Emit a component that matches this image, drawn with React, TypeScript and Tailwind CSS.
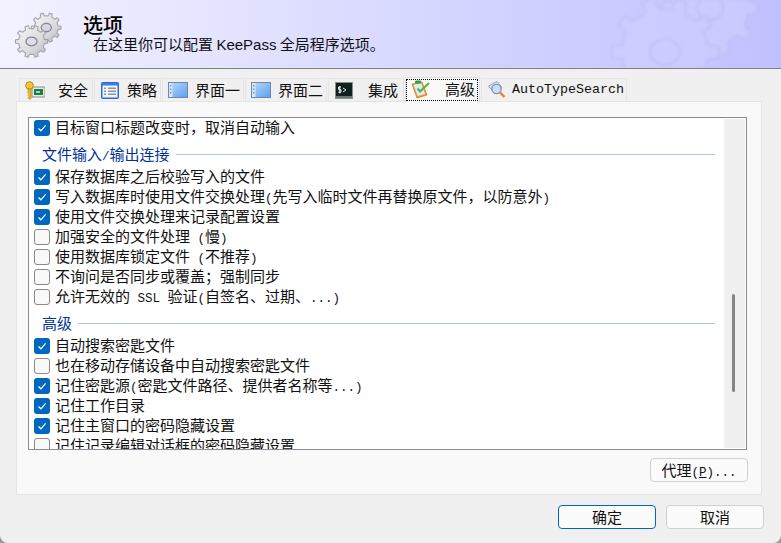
const cjk = "font-['Noto_Sans_CJK_SC',sans-serif]";

// gear outline, used for the banner icon and the faint watermark
const gearPath = (cx: number, cy: number, r: number, teeth: number) => {
  const pts: string[] = [];
  const step = (Math.PI * 2) / teeth;
  for (let i = 0; i < teeth; i++) {
    const a = i * step;
    const offs: [number, number][] = [
      [-0.5, 0.8],
      [-0.26, 0.8],
      [-0.16, 1],
      [0.16, 1],
      [0.26, 0.8],
      [0.5, 0.8],
    ];
    for (const [o, k] of offs) {
      const t = a + o * step;
      pts.push(`${(cx + Math.cos(t) * r * k).toFixed(2)} ${(cy + Math.sin(t) * r * k).toFixed(2)}`);
    }
  }
  return `M${pts.join("L")}Z`;
};

const GearsIcon = () => (
  <svg width="48" height="48" viewBox="0 0 52 52" className="shrink-0 blur-[0.5px]">
    <defs>
      <linearGradient id="gearFill" x1="0" y1="0" x2="1" y2="1">
        <stop offset="0" stopColor="#f6f6f8" />
        <stop offset="0.6" stopColor="#dcdce0" />
        <stop offset="1" stopColor="#b4b4b9" />
      </linearGradient>
    </defs>
    <path d={gearPath(35, 18, 16, 10)} fill="url(#gearFill)" stroke="#a5a5aa" strokeWidth="1.2" strokeLinejoin="round" />
    <ellipse cx="35" cy="18" rx="5.5" ry="4.5" fill="#d5d5e6" stroke="#85858a" strokeWidth="1.4" />
    <path d={gearPath(19, 33, 17.5, 10)} fill="url(#gearFill)" stroke="#a5a5aa" strokeWidth="1.2" strokeLinejoin="round" />
    <ellipse cx="19" cy="33" rx="6" ry="4.8" fill="#dcdcec" stroke="#85858a" strokeWidth="1.4" />
  </svg>
);

const Watermark = () => (
  <svg width="170" height="68" viewBox="0 0 170 68" className="absolute left-[600px] top-0 opacity-60 blur-[1.5px]">
    <g fill="#cfcfff" stroke="#bcbcee" strokeWidth="2" strokeLinejoin="round">
      <path d={gearPath(110, 8, 48, 10)} />
      <ellipse cx="110" cy="8" rx="13" ry="12" />
      <path d={gearPath(65, 52, 54, 10)} />
      <ellipse cx="65" cy="52" rx="15" ry="13" />
    </g>
  </svg>
);

const KeyIcon = () => (
  <svg width="20" height="19" viewBox="0 0 20 19" className="shrink-0">
    <rect x="7" y="6" width="13" height="10" fill="#e8e8e0" stroke="#8a8f88" />
    <rect x="9" y="8" width="9" height="6" fill="#17804a" />
    <rect x="11" y="10" width="4" height="2" fill="#9fd8b0" />
    <circle cx="4.5" cy="4.5" r="3.8" fill="#f5c531" stroke="#b98a14" />
    <path d="M3 8h3v10H4l-1-1.5 1-1-1-1 1-1-1-1z" fill="#f0b820" stroke="#b98a14" strokeWidth="0.7" />
  </svg>
);

const ListIcon = () => (
  <svg width="18" height="17" viewBox="0 0 18 17" className="shrink-0">
    <rect x="0.75" y="0.75" width="16.5" height="15.5" rx="1" fill="#f2f5fb" stroke="#2f6bd6" strokeWidth="1.5" />
    <rect x="1" y="1" width="16" height="2.5" fill="#3f7be0" />
    <path d="M3 5.5h2v1.5H3zM3 8.5h2V10H3zM3 11.5h2V13H3z" fill="#8a94a6" />
    <path d="M7 5.5h8v1.5H7zM7 8.5h8V10H7zM7 11.5h8V13H7z" fill="#8a94a6" />
  </svg>
);

const WindowIcon = () => (
  <svg width="20" height="16" viewBox="0 0 20 16" className="shrink-0">
    <defs>
      <linearGradient id="winFill" x1="0" y1="0" x2="1" y2="1">
        <stop offset="0" stopColor="#b9dafb" />
        <stop offset="1" stopColor="#5aa0f2" />
      </linearGradient>
    </defs>
    <rect x="0.5" y="0.5" width="19" height="15" fill="url(#winFill)" stroke="#6f86a8" />
    <rect x="1" y="1" width="3.5" height="14" fill="#d8e6f6" />
    <path d="M2 3h1.4v1.4H2zM2 6.5h1.4v1.4H2zM2 10h1.4v1.4H2z" fill="#6f8fc0" />
  </svg>
);

const TerminalIcon = () => (
  <svg width="18" height="17" viewBox="0 0 18 17" className="shrink-0">
    <rect x="0.5" y="0.5" width="17" height="16" fill="#10201f" stroke="#8d8d88" />
    <path d="M6 5H3.6v2.6H6v2.6H3.4M4.8 4v7.4" fill="none" stroke="#f2f2f2" strokeWidth="1" />
    <path d="M8 6l3 2-3 2" fill="none" stroke="#d8e8e8" strokeWidth="1" />
    <path d="M1 15h16" stroke="#c9c9c4" />
  </svg>
);

const ClipboardIcon = () => (
  <svg width="20" height="19" viewBox="0 0 20 19" className="shrink-0">
    <path d="M1 4l10-2 5 13-10 3z" fill="#f09a2c" stroke="#c9741a" strokeWidth="0.7" />
    <path d="M2.6 4.8l7.6-1.5 4 10.6-7.6 2.2z" fill="#dcecf8" />
    <rect x="4" y="0.5" width="6" height="3" rx="1" fill="#2f9e44" />
    <path d="M6.5 8.5l2.6 3L18 3" fill="none" stroke="#55b83e" strokeWidth="2.2" />
  </svg>
);

const SearchIcon = () => (
  <svg width="18" height="18" viewBox="0 0 18 18" className="shrink-0">
    <path d="M0.5 5L9 0.5l5 6-8 5z" fill="#dcdcf4" stroke="#9a9ad0" />
    <circle cx="8.5" cy="8" r="4.6" fill="#bfe3fa" stroke="#8f8fc4" strokeWidth="1.4" />
    <path d="M12 11.5l4.5 4.5" stroke="#e8843a" strokeWidth="2.4" />
  </svg>
);

const Latin = ({ text }: { text: string }) => (
  <>
    {text.split(/([\x20-\x7e]+)/).map((part, i) =>
      /^[\x20-\x7e]+$/.test(part) ? (
        <span key={i} className="font-['Liberation_Mono','Noto_Sans_CJK_SC',monospace] text-[12.5px] leading-[12px] whitespace-pre">
          {part}
        </span>
      ) : (
        <span key={i}>{part}</span>
      ),
    )}
  </>
);

const Check = ({ on, label }: { on: boolean; label: string }) => (
  <div className="flex h-[20px] shrink-0 items-center gap-[5px] pl-[5px] leading-[18px] whitespace-nowrap text-[#111]">
    {on ? (
      <span className="flex h-[16px] w-[16px] shrink-0 items-center justify-center rounded-[3px] bg-[#0067c0]">
        <svg width="10" height="10" viewBox="0 0 10 10">
          <path d="M1.5 5.5l2.4 2.3L8.6 2.4" fill="none" stroke="#fff" strokeWidth="1.2" />
        </svg>
      </span>
    ) : (
      <span className="h-[16px] w-[16px] shrink-0 rounded-[3px] border border-[#8a8a8a] bg-[#f9f9f9]" />
    )}
    <span className="pb-[2px]">
      <Latin text={label} />
    </span>
  </div>
);

const Group = ({ label }: { label: string }) => (
  <div className="flex h-[29px] shrink-0 items-center gap-[6px] pt-[3px] pl-[13px] pr-[9px] leading-[20px] whitespace-nowrap text-[#003399]">
    <span>
      <Latin text={label} />
    </span>
    <div className="h-px flex-1 bg-[#b0c4e6]" />
  </div>
);

const tabs = [
  { label: "安全", Icon: KeyIcon, box: "w-[74px] pl-[5px] gap-[13px]" },
  { label: "策略", Icon: ListIcon, box: "w-[67px] pl-[6px] gap-[8px]" },
  { label: "界面一", Icon: WindowIcon, box: "w-[82px] pl-[5px] gap-[7px]" },
  { label: "界面二", Icon: WindowIcon, box: "w-[82px] pl-[5px] gap-[7px]" },
  { label: "集成", Icon: TerminalIcon, box: "w-[76px] pl-[6px] gap-[15px]" },
];

const rows: { group?: string; on?: boolean; label?: string }[] = [
  { on: true, label: "目标窗口标题改变时，取消自动输入" },
  { group: "文件输入/输出连接" },
  { on: true, label: "保存数据库之后校验写入的文件" },
  { on: true, label: "写入数据库时使用文件交换处理(先写入临时文件再替换原文件，以防意外)" },
  { on: true, label: "使用文件交换处理来记录配置设置" },
  { on: false, label: "加强安全的文件处理 (慢)" },
  { on: false, label: "使用数据库锁定文件 (不推荐)" },
  { on: false, label: "不询问是否同步或覆盖；强制同步" },
  { on: false, label: "允许无效的 SSL 验证(自签名、过期、...)" },
  { group: "高级" },
  { on: true, label: "自动搜索密匙文件" },
  { on: false, label: "也在移动存储设备中自动搜索密匙文件" },
  { on: true, label: "记住密匙源(密匙文件路径、提供者名称等...)" },
  { on: true, label: "记住工作目录" },
  { on: true, label: "记住主窗口的密码隐藏设置" },
  { on: false, label: "记住记录编辑对话框的密码隐藏设置" },
];

export default function App() {
  return (
    <div className="h-[543px] w-[781px] overflow-hidden bg-[#9a9a9a]">
      <div className={`flex h-full flex-col overflow-hidden rounded-b-[8px] bg-[#f0f0f0] text-[15px] ${cjk}`}>
        <div className="relative flex h-[69px] shrink-0 items-start overflow-hidden border-b border-[#808080] bg-gradient-to-r from-[#f2f2ff] to-[#c0c0ff]">
          <Watermark />
          <div className="relative ml-[14px] mt-[11px]">
            <GearsIcon />
          </div>
          <div className="relative ml-[21px] flex flex-col">
            <div className="mt-[15px] text-[20px] leading-[20px] font-medium text-black">选项</div>
            <div className="ml-[10px] leading-[18px] text-[#111]">
              在这里你可以配置 <span className="font-['Liberation_Sans',sans-serif]">KeePass</span> 全局程序选项。
            </div>
          </div>
        </div>

        <div className="flex flex-1 flex-col px-[16px] pt-[7px]">
          <div className="relative z-10 flex h-[25px] items-end gap-px pl-[3px] text-[#111]">
            {tabs.map(({ label, Icon, box }) => (
              <div key={label} className={`flex h-[23px] items-center border border-b-0 border-[#e6e6e6] bg-[#f0f0f0] leading-[20px] ${box}`}>
                <Icon />
                <span>{label}</span>
              </div>
            ))}
            <div className="relative -mb-px flex h-[25px] w-[75px] items-center gap-[14px] border border-b-0 border-[#e0e0e0] bg-[#f9f9f9] pb-[2px] pl-[5px] leading-[20px]">
              <ClipboardIcon />
              <span>高级</span>
              <div className="absolute left-0 right-px top-px h-[22px] border border-dotted border-black" />
            </div>
            <div className="flex h-[23px] w-[146px] items-center gap-[6px] border border-b-0 border-[#e6e6e6] bg-[#f0f0f0] pl-[6px]">
              <SearchIcon />
              <span className="font-['Liberation_Mono',monospace] text-[13.33px]">AutoTypeSearch</span>
            </div>
          </div>

          <div className="flex h-[394px] w-[746px] flex-col border border-[#e5e5e5] bg-[#f9f9f9] pl-[11px] pr-[14px] pt-[15px]">
            <div className="flex h-[333px] w-[719px] shrink-0 border border-[#8c8c94] bg-white">
              <div className="flex min-w-0 flex-1 flex-col overflow-hidden">
                {rows.map((r, i) =>
                  r.group ? <Group key={i} label={r.group} /> : <Check key={i} on={!!r.on} label={r.label ?? ""} />,
                )}
              </div>
              <div className="my-px mr-px w-[21px] shrink-0 border-l border-[#f4f4f4] bg-[#f0f0f0] pl-[7px] pt-[175px]">
                <div className="h-[98px] w-[3px] rounded-full bg-[#858585]" />
              </div>
            </div>
            <div className="-mr-px mt-[8px] flex h-[24px] justify-end">
              <button className="h-[24px] w-[98px] rounded-[4px] border border-[#d0d0d0] bg-[#fbfbfb] pb-px text-center leading-[20px] text-[#111]">
                代理<Latin text="(" />
                <span className="font-['Liberation_Mono',monospace] text-[12.5px] leading-[12px] underline">P</span>
                <Latin text=")..." />
              </button>
            </div>
          </div>

          <div className="mr-[1px] mt-[10px] flex justify-end gap-[10px]">
            <button className="h-[24px] w-[98px] rounded-[4px] border border-[#0067c0] bg-[#fbfbfb] pb-px leading-[20px] text-[#111]">确定</button>
            <button className="h-[24px] w-[98px] rounded-[4px] border border-[#d0d0d0] bg-[#fbfbfb] pb-px leading-[20px] text-[#111]">取消</button>
          </div>
        </div>
      </div>
    </div>
  );
}
